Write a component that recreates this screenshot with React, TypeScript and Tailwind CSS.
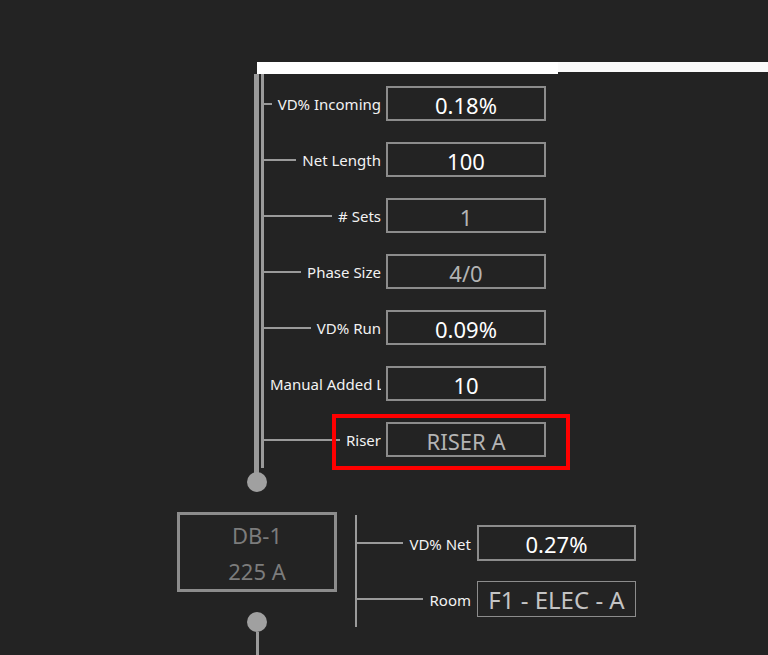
import React from "react";

type Field = { label: string; value: string; dim?: boolean; highlight?: boolean };

const fields: Field[] = [
  { label: "VD% Incoming", value: "0.18%" },
  { label: "Net Length", value: "100" },
  { label: "# Sets", value: "1", dim: true },
  { label: "Phase Size", value: "4/0", dim: true },
  { label: "VD% Run", value: "0.09%" },
  { label: "Manual Added Length", value: "10" },
  { label: "Riser", value: "RISER A", dim: true, highlight: true },
];

const FieldRow = ({ label, value, dim, highlight }: Field) => {
  return (
    <div className="relative flex items-center h-[35px]">
      <div className="flex-1 min-w-0 h-[2px] bg-[#9a9a9a]" />
      <span className="shrink overflow-hidden whitespace-nowrap pl-[6px] pt-[2px] text-[15px] text-[#f2f2f2]">
        {label}
      </span>
      <div
        className={
          "ml-[5px] w-[160px] h-[35px] shrink-0 flex items-center justify-center border-2 border-[#8c8c8c] text-[22px] pt-[3px] " +
          (dim ? "text-[#b4b4b4]" : "text-white")
        }
      >
        {value}
      </div>
      {highlight && (
        <div className="absolute left-[68px] top-[-8px] w-[238px] h-[56px] border-4 border-[#ff0000]" />
      )}
    </div>
  );
};

const App = () => {
  return (
    <div
      className="w-[768px] h-[655px] overflow-hidden bg-[#232323]"
      style={{ fontFamily: '"Noto Sans", "Open Sans", sans-serif' }}
    >
      {/* top feed bar */}
      <div className="flex items-start pt-[62px] pl-[257px]">
        <div className="w-[301px] h-[12px] bg-white" />
        <div className="flex-1 h-[10px] bg-[#fafafa]" />
      </div>

      {/* riser with fields */}
      <div className="flex pl-[254px]">
        <div className="flex flex-col items-start w-[10px] shrink-0">
          <div className="flex gap-[2px] h-[394px]">
            <div className="w-[5px] bg-[#9a9a9a]" />
            <div className="w-[3px] bg-[#9a9a9a]" />
          </div>
          <div className="w-[5px] h-[5px] bg-[#9a9a9a]" />
          <div className="w-[20px] h-[20px] -ml-[7px] -mt-px rounded-full bg-[#a0a0a0]" />
        </div>
        <div className="flex flex-col gap-[21px] pt-[12px] w-[282px]">
          {fields.map((f, key) => (
            <FieldRow key={key} {...f} />
          ))}
        </div>
      </div>

      {/* panel DB-1 */}
      <div className="flex items-start mt-[20px] pl-[177px]">
        <div className="flex flex-col items-center">
          <div className="w-[160px] h-[80px] border-[3px] border-[#8c8c8c] flex flex-col items-center justify-center text-[22px] leading-[36px] pt-[2px] text-[#7c7c7c]">
            <span>DB-1</span>
            <span>225 A</span>
          </div>
          <div className="mt-[20px] w-[20px] h-[20px] rounded-full bg-[#a0a0a0]" />
          <div className="w-[3px] h-[40px] bg-[#9a9a9a]" />
        </div>
        <div className="flex ml-[18px] mt-[3px]">
          <div className="w-[2px] h-[112px] bg-[#9a9a9a]" />
          <div className="flex flex-col gap-[20px] pt-[10px] w-[279px]">
            <div className="flex items-center h-[36px]">
              <div className="flex-1 h-[2px] bg-[#9a9a9a]" />
              <span className="pl-[6px] pt-[2px] text-[15px] text-[#f2f2f2] whitespace-nowrap">VD% Net</span>
              <div className="ml-[6px] w-[159px] h-[36px] shrink-0 flex items-center justify-center border-2 border-[#8c8c8c] text-[22px] pt-[3px] text-white">
                0.27%
              </div>
            </div>
            <div className="flex items-center h-[36px]">
              <div className="flex-1 h-[2px] bg-[#9a9a9a]" />
              <span className="pl-[6px] pt-[2px] text-[15px] text-[#f2f2f2] whitespace-nowrap">Room</span>
              <div className="ml-[6px] w-[159px] h-[36px] shrink-0 flex items-center justify-center border border-[#8c8c8c] text-[24px] pt-[2px] text-[#c4c4c4]">
                F1 - ELEC - A
              </div>
            </div>
          </div>
        </div>
      </div>
    </div>
  );
};

export default App;
